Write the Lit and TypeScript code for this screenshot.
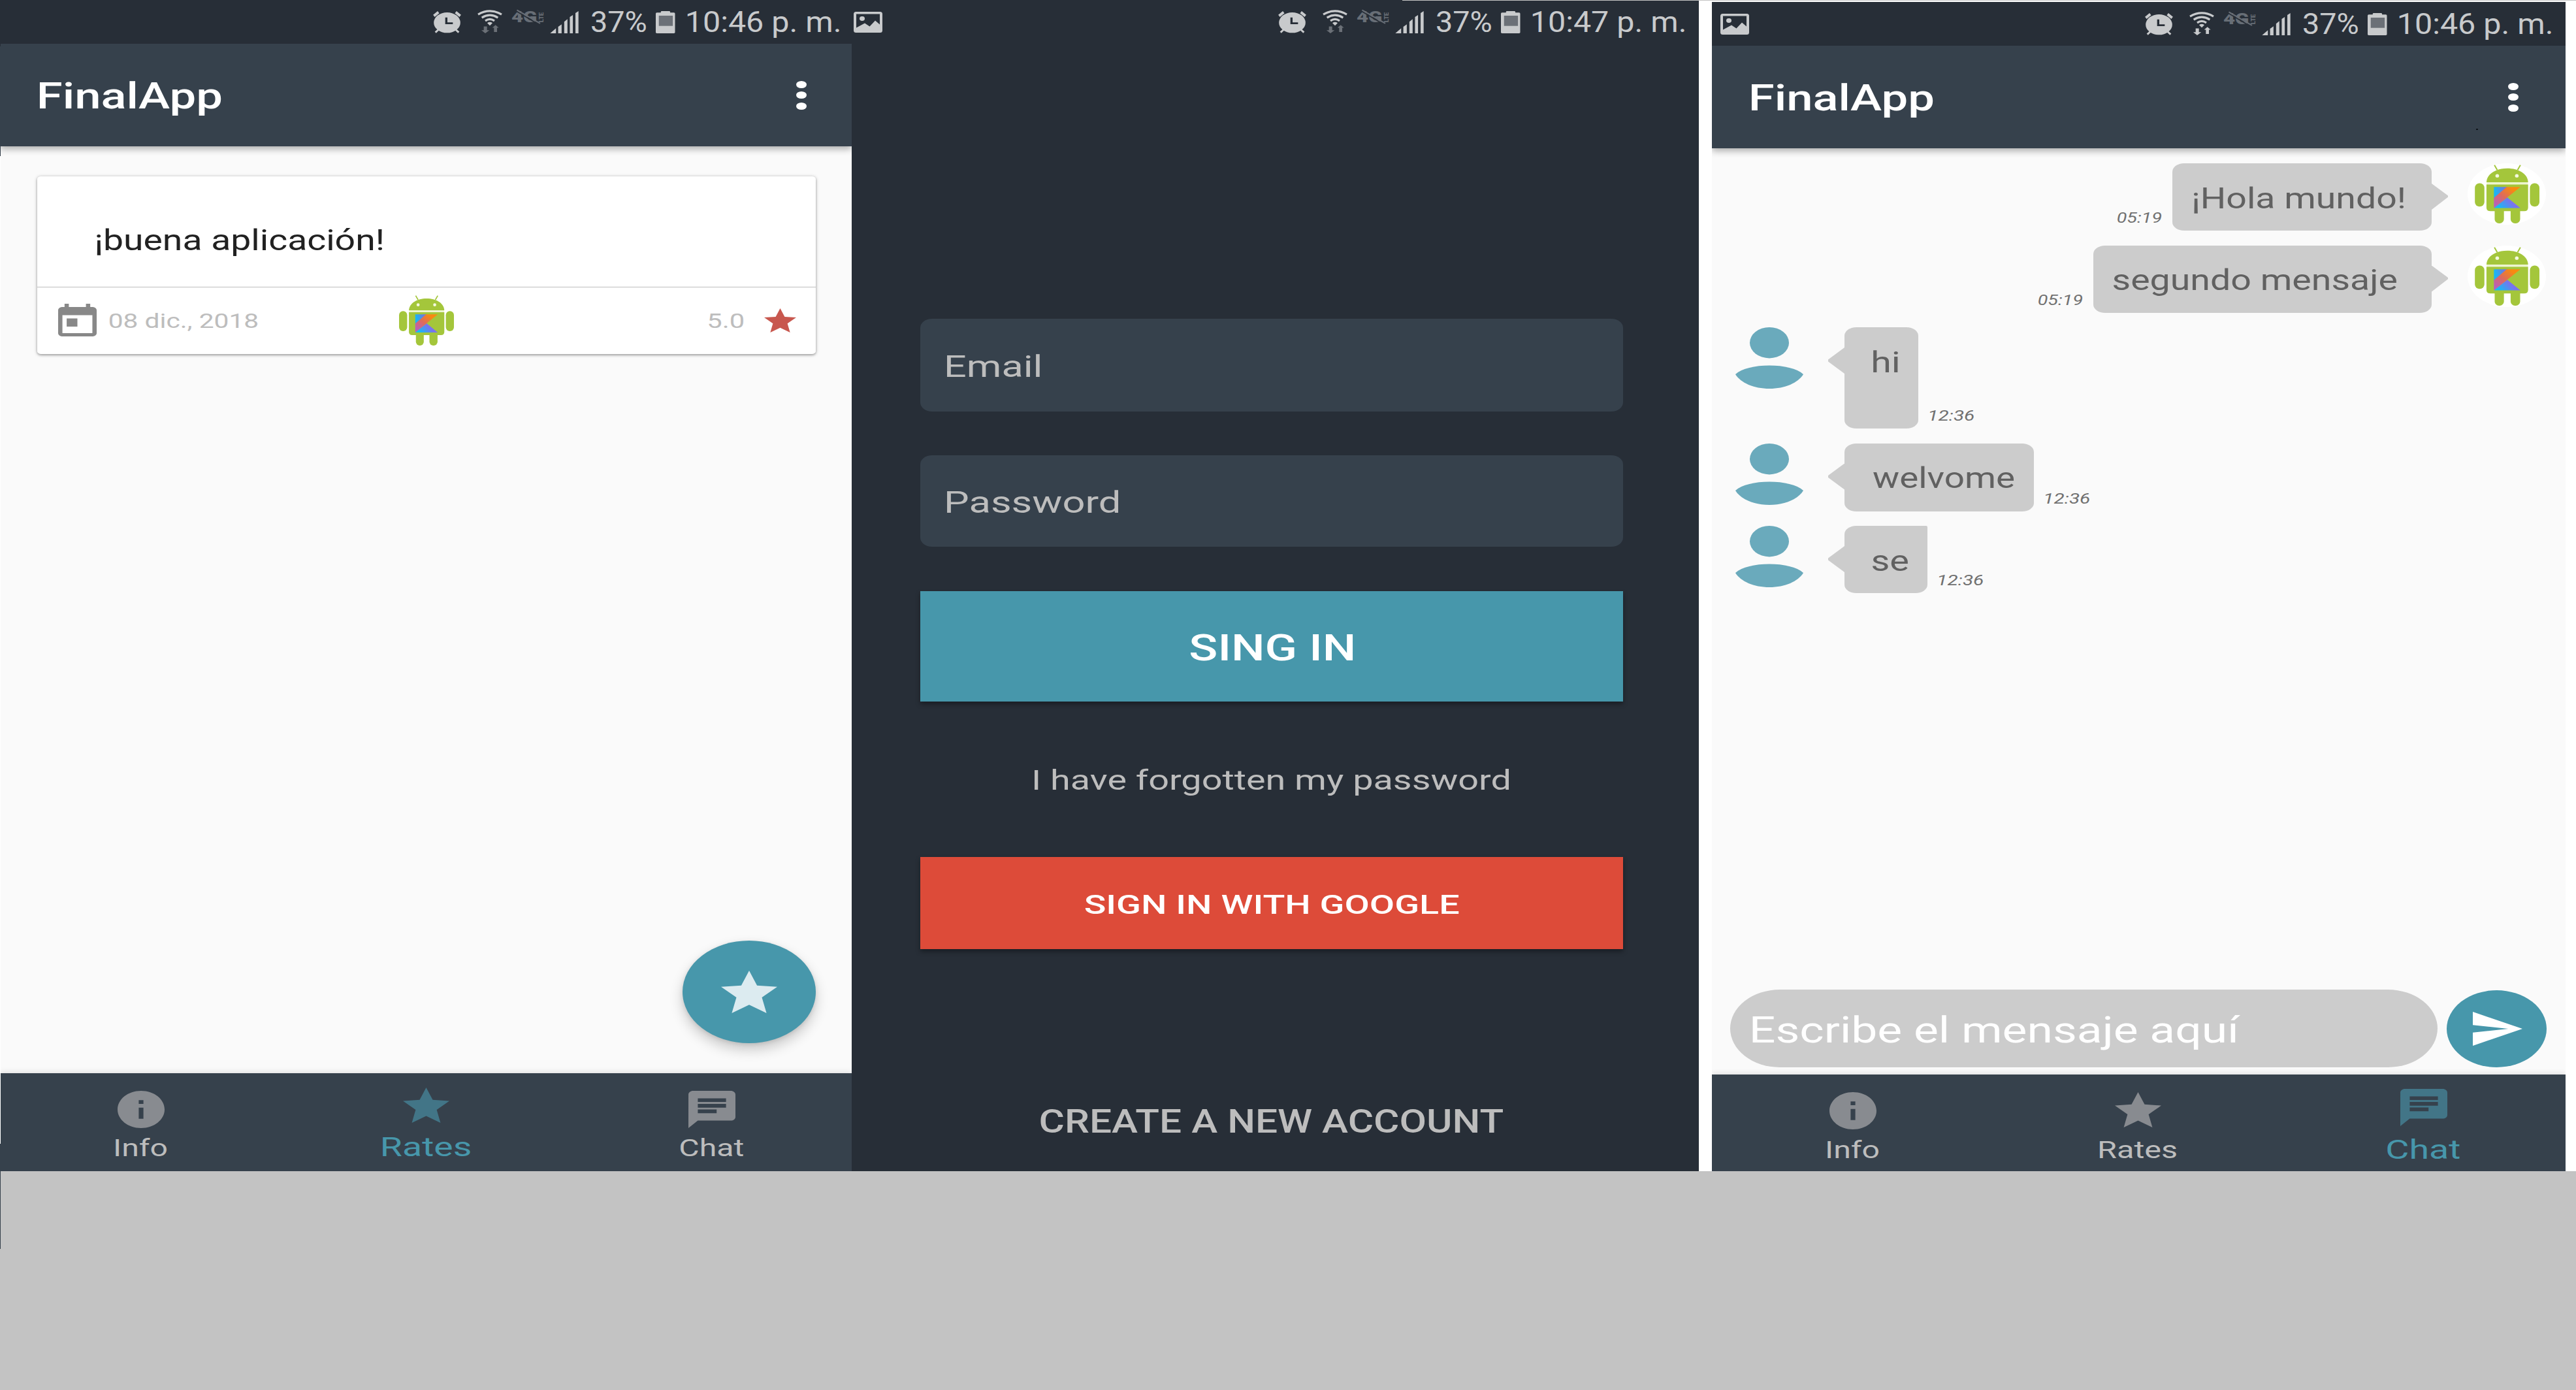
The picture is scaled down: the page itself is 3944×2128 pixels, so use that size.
import { LitElement, html, css, nothing } from "lit";
import { customElement, property } from "lit/decorators.js";
import { classMap } from "lit/directives/class-map.js";
import { styleMap } from "lit/directives/style-map.js";

/* ---------- icons ---------- */

const starIcon = html`<svg viewBox="2 2 20 19" preserveAspectRatio="none">
  <path fill="currentColor" d="M12 17.27L18.18 21l-1.64-7.03L22 9.24l-7.19-.61L12 2 9.19 8.63 2 9.24l5.46 4.73L5.82 21z" />
</svg>`;

const infoIcon = html`<svg viewBox="2 2 20 20" preserveAspectRatio="none">
  <path fill="currentColor" d="M12 2C6.48 2 2 6.48 2 12s4.48 10 10 10 10-4.48 10-10S17.52 2 12 2zm1 15h-2v-6h2v6zm0-8h-2V7h2v2z" />
</svg>`;

const chatIcon = html`<svg viewBox="2 2 20 20" preserveAspectRatio="none">
  <path fill="currentColor" d="M20 2H4c-1.1 0-1.99.9-1.99 2L2 22l4-4h14c1.1 0 2-.9 2-2V4c0-1.1-.9-2-2-2zM6 9h12v2H6V9zm8 5H6v-2h8v2zm4-6H6V6h12v2z" />
</svg>`;

const todayIcon = html`<svg viewBox="3 1 18 20" preserveAspectRatio="none">
  <path fill="currentColor" d="M19 3h-1V1h-2v2H8V1H6v2H5c-1.11 0-1.99.9-1.99 2L3 19c0 1.1.89 2 2 2h14c1.1 0 2-.9 2-2V5c0-1.1-.9-2-2-2zm0 16H5V8h14v11zM7 10h5v5H7z" />
</svg>`;

const sendIcon = html`<svg viewBox="2 3 21 18" preserveAspectRatio="none">
  <path fill="currentColor" d="M2.01 21L23 12 2.01 3 2 10l15 2-15 2z" />
</svg>`;

const imageIcon = html`<svg viewBox="0 0 44 32" preserveAspectRatio="none">
  <rect width="44" height="32" rx="3.5" fill="currentColor" />
  <path fill="#272e37" d="M4 3.5H40V19.5L33 13.5 24.5 22.5 17 17.5 4 24.5Z" />
  <ellipse cx="13" cy="10.5" rx="4" ry="3.4" fill="currentColor" />
</svg>`;

const alarmIcon = html`<svg viewBox="0 0 129 102" preserveAspectRatio="none">
  <g stroke="currentColor" stroke-width="12" fill="none">
    <path d="M4 22L25 5M104 5L125 22" />
    <path stroke-width="9" d="M11 98L26 84M118 98L103 84" />
  </g>
  <ellipse cx="64.5" cy="53" rx="61" ry="47" fill="currentColor" />
  <path fill="#272e37" d="M56 29H66V52H91V60H56Z" />
</svg>`;

const wifiIcon = (bright: boolean) => html`<svg viewBox="0 0 114 107" preserveAspectRatio="none">
  <g stroke="currentColor" stroke-width="9.5" fill="none">
    <path d="M3 21Q57 -10 111 21" />
    <path d="M20 36Q57 13 94 36" />
    <path d="M36 50Q57 36 78 50" />
  </g>
  <path fill="currentColor" d="M45 60Q57 52 69 60L57 72Z" />
  <g fill=${bright ? "currentColor" : "#6b7077"}>
    <path d="M29 76H44V93H55L36 107 18 93H29Z" />
    <path d="M83 69L98 82H90V101H76V82H68Z" />
  </g>
</svg>`;

const lteIcon = html`<svg viewBox="0 0 145 65" preserveAspectRatio="none">
  <g fill="#686e76" font-family="Roboto, sans-serif" font-weight="900">
    <text transform="translate(0 55) scale(1.36 1)" x="0" y="0" font-size="68">4G</text>
    <text transform="translate(146 57) rotate(-90)" font-size="28">LTE</text>
  </g>
  <path d="M22 6L126 68" stroke="#272e37" stroke-width="5" />
  <path d="M25 1L130 62" stroke="#686e76" stroke-width="6" />
</svg>`;

const signalIcon = html`<svg viewBox="0 0 133 102" preserveAspectRatio="none">
  <path fill="currentColor" d="M1 102L28 79V102ZM38 102V72L54 61V102ZM66 102V49L81 37V102ZM92 102V27L106 18V102ZM118 102V9L132 0V102Z" />
</svg>`;

const batteryIcon = html`<svg viewBox="0 0 87 102" preserveAspectRatio="none">
  <rect x="23" width="42" height="14" rx="4" fill="currentColor" />
  <rect y="7" width="87" height="95" rx="5" fill="currentColor" />
  <rect x="14" y="21" width="63" height="47" fill="#6b7077" />
</svg>`;

const droid = html`<svg viewBox="0 0 254 231" preserveAspectRatio="none">
  <defs>
    <linearGradient id="band" x1="0" y1="1" x2="1" y2="0">
      <stop offset="0.1" stop-color="#b65fc0" /><stop offset="0.45" stop-color="#dd6a5e" /><stop offset="0.8" stop-color="#f88a10" />
    </linearGradient>
    <linearGradient id="corner" x1="0" y1="0.4" x2="1" y2="0.1">
      <stop offset="0.1" stop-color="#19b5f5" /><stop offset="1" stop-color="#8a68d8" />
    </linearGradient>
    <linearGradient id="foot" x1="0" y1="1" x2="1" y2="0.6">
      <stop offset="0.15" stop-color="#0fc0f5" /><stop offset="0.75" stop-color="#7a72ee" />
    </linearGradient>
  </defs>
  <rect x="49" y="66" width="160" height="14" fill="#edf5cf" />
  <g fill="#a4c63b">
    <path d="M48 69C50 36 85 15 129 15S208 36 210 69Z" />
    <path d="M48 78H210V168Q210 183 195 183H63Q48 183 48 168Z" />
    <rect x="3" y="73" width="37" height="92" rx="18" />
    <rect x="217" y="73" width="37" height="92" rx="18" />
    <rect x="80" y="160" width="36" height="71" rx="17" />
    <rect x="142" y="160" width="37" height="71" rx="17" />
  </g>
  <path d="M79 2L90 21M180 2L169 21" stroke="#a4c63b" stroke-width="5" />
  <circle cx="90" cy="44" r="7" fill="#f4f9e0" /><circle cx="166" cy="44" r="7" fill="#f4f9e0" />
  <path fill="url(#corner)" d="M77 88H130L77 136Z" />
  <path fill="url(#foot)" d="M77 171L129 129 180 171Z" />
  <path fill="url(#band)" d="M127 88H180L77 171V130Z" />
</svg>`;

const personIcon = html`<svg viewBox="0 0 104 94" preserveAspectRatio="none">
  <ellipse cx="52" cy="23.7" rx="30" ry="23.7" fill="currentColor" />
  <path fill="currentColor" d="M0 72C10 63 30 58.5 52 58.5S94 63 104 72C96 85 76 94 52 94S8 85 0 72Z" />
</svg>`;

/* ---------- text that fills a given ink width ---------- */

@customElement("fit-text")
export class FitText extends LitElement {
  @property({ type: Number }) w = 0;
  @property() text = "";

  static styles = css`
    :host { display: block; flex: none; line-height: 1; height: 1em; white-space: pre; }
    .run { display: inline-block; transform-origin: 0 0; vertical-align: top; }
  `;

  protected updated() {
    const cs = getComputedStyle(this);
    const ctx = document.createElement("canvas").getContext("2d")!;
    ctx.font = `${cs.fontStyle} ${cs.fontWeight} ${cs.fontSize} ${cs.fontFamily}`;
    const m = ctx.measureText(this.text);
    const ink = m.actualBoundingBoxLeft + m.actualBoundingBoxRight;
    const inset = 1;
    const k = (this.w - 2 * inset) / ink;
    const run = this.renderRoot.querySelector<HTMLElement>(".run")!;
    run.style.transform = `translateX(${inset + m.actualBoundingBoxLeft * k}px) scaleX(${k})`;
    this.style.width = `${this.w}px`;
  }

  render() {
    return html`<span class="run">${this.text}</span>`;
  }
}

/* ---------- status bar ---------- */

@customElement("status-bar")
export class StatusBar extends LitElement {
  @property() time = "";
  @property({ type: Boolean }) picture = false;
  @property({ type: Boolean }) transfer = false;

  static styles = css`
    :host { display: flex; align-items: center; height: 67px; background: #272e37; color: #c8cacc; flex: none; font-size: 44.5px; box-sizing: border-box; }
    svg { display: block; width: 100%; height: 100%; overflow: visible; }
    .i { flex: none; height: 34px; }
    .space { flex: 1; }
    .picture { width: 44px; height: 32px; }
    .alarm { width: 43px; margin-right: 25px; }
    .wifi { width: 38px; height: 36px; margin: 0 14px 2px 0; }
    .lte { width: 49px; height: 22px; margin: 0 10px 15px 0; }
    .signal { width: 44px; margin-right: 18.5px; }
    .battery { width: 29.5px; margin: 0 17px 0 14.5px; }
    fit-text { margin-top: 2px; }
  `;

  render() {
    return html`
      ${this.picture ? html`<div class="i picture">${imageIcon}</div>` : nothing}
      <div class="space"></div>
      <div class="i alarm">${alarmIcon}</div>
      <div class="i wifi">${wifiIcon(this.transfer)}</div>
      <div class="i lte">${lteIcon}</div>
      <div class="i signal">${signalIcon}</div>
      <fit-text text="37%" w="85"></fit-text>
      <div class="i battery">${batteryIcon}</div>
      <fit-text text=${this.time} w="235.5"></fit-text>
    `;
  }
}

/* ---------- toolbar ---------- */

@customElement("tool-bar")
export class ToolBar extends LitElement {
  static styles = css`
    :host { display: flex; align-items: center; justify-content: space-between; height: 157px; flex: none; padding: 0 69px 0 60px; box-sizing: border-box; background: #36414c; color: #fff; box-shadow: 0 4px 10px rgba(0, 0, 0, 0.32); position: relative; clip-path: inset(0 0 -30px 0); }
    fit-text { font-size: 56px; font-weight: 500; margin-top: 3px; }
    .menu { display: flex; flex-direction: column; gap: 5.5px; }
    .dot { width: 16px; height: 11px; border-radius: 50%; background: #fff; }
  `;
  render() {
    return html`<fit-text text="FinalApp" w="280"></fit-text>
      <div class="menu"><div class="dot"></div><div class="dot"></div><div class="dot"></div></div>`;
  }
}

/* ---------- bottom navigation ---------- */

@customElement("bottom-nav")
export class BottomNav extends LitElement {
  @property() active = "";

  static styles = css`
    :host { display: grid; grid-template-columns: 432.5px 440.5px 433px; flex: none; height: 150px; box-sizing: border-box; background: #36414c; box-shadow: 0 -2px 8px rgba(0, 0, 0, 0.1); position: relative; clip-path: inset(-20px 0 0 0); }
    svg { display: block; width: 100%; height: 100%; }
    .item { display: flex; flex-direction: column; align-items: center; padding-top: 27px; color: #bdbdbd; font-size: 36.5px; }
    .icon { width: 72px; height: 57px; color: #888b90; }
    .icon.star { width: 71px; height: 54px; margin-bottom: 3px; }
    fit-text { margin-top: var(--label-gap, 12.5px); }
    .item.on { padding-top: 22px; color: #4797ab; font-size: 40px; }
    .on .icon { color: #427587; }
    .on fit-text { margin-top: calc(var(--label-gap, 12.5px) + 2.5px); }
  `;

  render() {
    const items = [
      { name: "Info", icon: infoIcon, w: 81, on: 90 },
      { name: "Rates", icon: starIcon, w: 120, on: 136 },
      { name: "Chat", icon: chatIcon, w: 98, on: 113 },
    ];
    return items.map((i) => {
      const on = i.name === this.active;
      return html`<div class=${classMap({ item: true, on })}>
        <div class=${classMap({ icon: true, star: i.name === "Rates" })}>${i.icon}</div>
        <fit-text text=${i.name} .w=${on ? i.on : i.w}></fit-text>
      </div>`;
    });
  }
}

/* ---------- rates screen ---------- */

@customElement("rates-screen")
export class RatesScreen extends LitElement {
  static styles = css`
    :host { display: flex; flex-direction: column; width: 1304px; height: 1793px; background: #fafafa; flex: none; }
    svg { display: block; width: 100%; height: 100%; }
    status-bar { padding-right: 18px; }
    .content { flex: 1; position: relative; padding: 46px 55px 0 57px; }
    .card { height: 271.5px; box-sizing: border-box; background: #fff; border-radius: 6px / 4px; box-shadow: 0 1px 5px rgba(0, 0, 0, 0.36), 0 2px 3px rgba(0, 0, 0, 0.12); }
    .comment { height: 169.5px; box-sizing: border-box; padding: 76px 0 0 89px; font-size: 44px; color: #212121; border-bottom: 1.5px solid #bdbdbd; }
    .foot { display: grid; grid-template-columns: 1fr auto 1fr; align-items: center; height: 101px; padding: 0 30px 0 32px; font-size: 31.5px; color: #bdbdbd; }
    .date { display: flex; align-items: center; gap: 18px; }
    .foot fit-text { margin-top: 3px; }
    .today { width: 59px; height: 50px; color: #888; }
    .droid { width: 85px; height: 77px; margin: 0 2px 0 -2px; }
    .score { display: flex; align-items: center; justify-content: flex-end; gap: 31px; }
    .star { width: 49px; height: 37px; color: #c8574e; }
    .fab { position: absolute; right: 55px; bottom: 46.5px; width: 204px; height: 156.5px; border-radius: 50%; background: #4797ab; box-shadow: 0 10px 20px rgba(0, 0, 0, 0.2), 0 2px 6px rgba(0, 0, 0, 0.1); display: flex; align-items: center; justify-content: center; color: #dcebf0; }
    .fab-star { width: 86px; height: 65px; }
  `;
  render() {
    return html`
      <status-bar time="10:46 p. m."></status-bar>
      <tool-bar></tool-bar>
      <div class="content">
        <div class="card">
          <div class="comment"><fit-text text="¡buena aplicación!" w="441"></fit-text></div>
          <div class="foot">
            <div class="date"><div class="today">${todayIcon}</div><fit-text text="08 dic., 2018" w="229"></fit-text></div>
            <div class="droid">${droid}</div>
            <div class="score"><fit-text text="5.0" w="55"></fit-text><div class="star">${starIcon}</div></div>
          </div>
        </div>
        <div class="fab"><div class="fab-star">${starIcon}</div></div>
      </div>
      <bottom-nav active="Rates"></bottom-nav>
    `;
  }
}

/* ---------- sign-in screen ---------- */

@customElement("login-screen")
export class LoginScreen extends LitElement {
  static styles = css`
    :host { display: flex; flex-direction: column; width: 1297px; height: 1793px; background: #272e37; flex: none; color: #bdbdbd; }
    status-bar { padding: 0 21px 0 3px; }
    .form { display: flex; flex-direction: column; width: 1076px; padding: 421px 0 0 105px; }
    .field { display: flex; align-items: center; height: 142px; box-sizing: border-box; padding: 3px 0 0 39px; border-radius: 18px / 14px; background: #36414c; font-size: 47px; }
    .password { height: 140px; margin: 67px 0 68px; }
    .button { display: flex; align-items: center; justify-content: center; box-sizing: border-box; padding-top: 5px; color: #fff; font-weight: 500; box-shadow: 0 4px 7px rgba(0, 0, 0, 0.36); }
    .signin { height: 169px; background: #4797ab; font-size: 55px; }
    .google { height: 141.5px; background: #dd4b39; font-size: 41.5px; }
    .forgot { align-self: center; margin: 99px 0 95.5px; font-size: 43px; }
    .create { align-self: center; margin-top: 239.5px; font-size: 49.5px; font-weight: 500; }
  `;
  render() {
    return html`
      <status-bar time="10:47 p. m." picture></status-bar>
      <div class="form">
        <div class="field"><fit-text text="Email" w="145"></fit-text></div>
        <div class="field password"><fit-text text="Password" w="266"></fit-text></div>
        <div class="button signin"><fit-text text="SING IN" w="250"></fit-text></div>
        <fit-text class="forgot" text="I have forgotten my password" w="730"></fit-text>
        <div class="button google"><fit-text text="SIGN IN WITH GOOGLE" w="575"></fit-text></div>
        <fit-text class="create" text="CREATE A NEW ACCOUNT" w="711"></fit-text>
      </div>
    `;
  }
}

/* ---------- chat screen ---------- */

interface Message {
  own: boolean;
  text: string;
  ink: number;
  width: number;
  height: number;
  pad: number;
  time: string;
  square?: boolean;
}

const messages: Message[] = [
  { own: true, text: "¡Hola mundo!", ink: 324, width: 397, height: 103, pad: 32, time: "05:19" },
  { own: true, text: "segundo mensaje", ink: 435, width: 518.5, height: 103, pad: 30.5, time: "05:19" },
  { own: false, text: "hi", ink: 40, width: 113, height: 155, pad: 42.5, time: "12:36" },
  { own: false, text: "welvome", ink: 218, width: 290, height: 104, pad: 41.5, time: "12:36" },
  { own: false, text: "se", ink: 56, width: 127, height: 103, pad: 42, time: "12:36", square: true },
];

@customElement("chat-screen")
export class ChatScreen extends LitElement {
  static styles = css`
    :host { display: flex; flex-direction: column; width: 1307px; height: 1790px; background: #fafafa; flex: none; }
    svg { display: block; width: 100%; height: 100%; }
    status-bar { padding: 0 21px 0 13px; }
    tool-bar { padding-right: 72px; }
    bottom-nav { height: 148px; --label-gap: 14px; }
    .speck { position: absolute; left: 3791px; top: 197px; width: 3px; height: 2px; background: #10151a; }
    .list { flex: 1; display: flex; flex-direction: column; gap: 22.5px; padding-top: 23px; }
    .row { display: flex; align-items: flex-start; padding-left: 36px; }
    .row.own { flex-direction: row-reverse; padding: 0 30px 0 0; }
    .avatar { width: 104px; height: 94px; margin-right: 38px; color: #6aaabc; flex: none; }
    .own .avatar { width: 100px; height: 90px; padding: 2px 10px; margin: 0 0 0 30px; background: #fff; border-radius: 50%; }
    .tail { width: 25px; height: 40px; margin-top: 31px; background: #ccc; clip-path: polygon(100% 0, 100% 100%, 0 54%, 0 46%); flex: none; }
    .own .tail { clip-path: polygon(0 0, 0 100%, 100% 52%, 100% 46%); }
    .bubble { box-sizing: border-box; background: #ccc; border-radius: 18px / 13px; padding-top: 31.5px; font-size: 44.5px; color: #616161; flex: none; }
    .square { border-top-right-radius: 2px; }
    .time { align-self: flex-end; margin: 0 0 8px 15.5px; font-size: 22px; font-style: italic; color: #707070; }
    .own .time { margin: 0 15px 8px 0; }
    .composer { display: flex; gap: 14px; padding: 0 0 11px 28px; }
    .input { display: flex; align-items: center; width: 1083px; height: 119px; box-sizing: border-box; padding: 5px 0 0 33px; border-radius: 76px / 59.5px; background: #ccc; color: #fff; font-size: 55px; }
    .send { display: flex; align-items: center; justify-content: center; width: 153px; height: 118px; border-radius: 50%; background: #4797ab; color: #fff; margin-top: 1px; }
    .plane { width: 76px; height: 52px; margin-left: 3px; }
  `;

  private row(m: Message) {
    return html`<div class=${classMap({ row: true, own: m.own })}>
      <div class="avatar">${m.own ? droid : personIcon}</div>
      <div class="tail"></div>
      <div
        class=${classMap({ bubble: true, square: !!m.square })}
        style=${styleMap({ width: `${m.width}px`, height: `${m.height}px`, paddingLeft: `${m.pad}px` })}
      ><fit-text text=${m.text} .w=${m.ink}></fit-text></div>
      <fit-text class="time" text=${m.time} w="70"></fit-text>
    </div>`;
  }

  render() {
    return html`
      <status-bar time="10:46 p. m." picture transfer></status-bar>
      <tool-bar></tool-bar>
      <div class="list">${messages.map((m) => this.row(m))}</div>
      <div class="composer">
        <div class="input"><fit-text text="Escribe el mensaje aquí" w="750"></fit-text></div>
        <div class="send"><div class="plane">${sendIcon}</div></div>
      </div>
      <bottom-nav active="Chat"></bottom-nav>
      <div class="speck"></div>
    `;
  }
}

/* ---------- page ---------- */

@customElement("app-root")
export class AppRoot extends LitElement {
  static styles = css`
    :host { display: block; position: relative; width: 3944px; height: 2128px; overflow: hidden; background: #c3c3c3; font-family: Roboto, "Liberation Sans", sans-serif; }
    .screens { display: flex; height: 1793px; background: #fff; }
    chat-screen { margin: 3px 0 0 20px; }
    .rule { position: absolute; left: 2147px; right: 0; top: 0; height: 1px; background: #c3c3c3; }
    .edge { position: absolute; left: 0; top: 0; width: 1px; height: 1912px; background: linear-gradient(#272e37 0 71px, #36414c 71px 239px, #fff 239px 1751px, #36414c 1751px); }
  `;
  render() {
    return html`
      <div class="screens">
        <rates-screen></rates-screen>
        <login-screen></login-screen>
        <chat-screen></chat-screen>
      </div>
      <div class="rule"></div>
      <div class="edge"></div>
    `;
  }
}
